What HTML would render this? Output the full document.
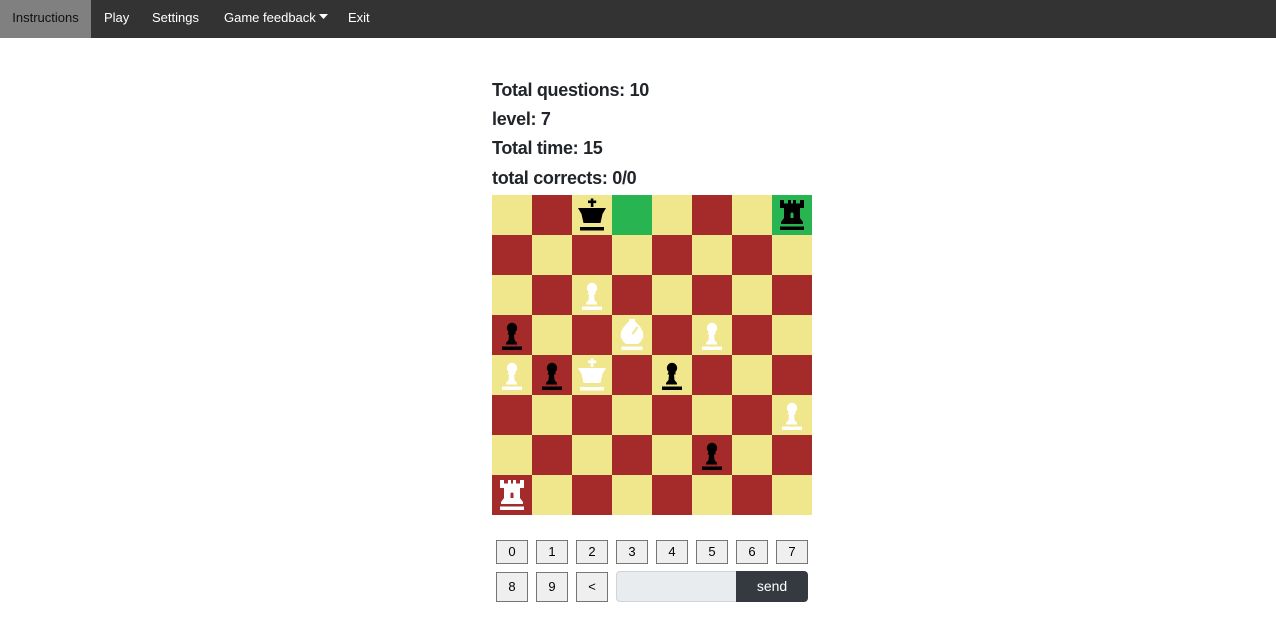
<!DOCTYPE html>
<html><head><meta charset="utf-8"><style>
*{margin:0;padding:0;box-sizing:border-box}
body{width:1276px;height:644px;background:#fff;font-family:"Liberation Sans",sans-serif;position:relative;overflow:hidden}
.nav{position:absolute;left:0;top:0;width:1276px;height:38px;background:#333}
.nav span{position:absolute;top:0;height:38px;line-height:36px;font-size:13px;color:#fff;white-space:nowrap}
.nav .act{left:0;width:91px;background:#808080;color:#111;text-align:center}
.info{position:absolute;left:492px;font-size:18px;font-weight:bold;color:#212529;letter-spacing:-0.3px}
.board{position:absolute;left:492px;top:195px;width:320px;height:320px}
.sq{position:absolute;width:40px;height:40px}
.btn{position:absolute;width:32px;background:#efefef;border:1px solid #767676;font-size:13px;text-align:center;color:#000}
.inp{position:absolute;left:616px;top:571px;width:122px;height:31px;background:#e9ecef;border:1px solid #ced4da;border-radius:4px 0 0 4px}
.send{position:absolute;left:736px;top:571px;width:72px;height:31px;background:#343a40;color:#fff;border-radius:0 4px 4px 0;font-size:14px;text-align:center;line-height:31px}
</style></head><body>
<div class="nav">
<span class="act">Instructions</span>
<span style="left:104px">Play</span>
<span style="left:152px">Settings</span>
<span style="left:224px">Game feedback <svg width="9" height="6" viewBox="0 0 9 6" style="vertical-align:2px"><path d="M0 0H9L4.5 5Z" fill="#fff"/></svg></span>
<span style="left:348px">Exit</span>
</div>
<div class="info" style="top:80px">Total questions: 10</div>
<div class="info" style="top:109px">level: 7</div>
<div class="info" style="top:138px">Total time: 15</div>
<div class="info" style="top:168px">total corrects: 0/0</div>
<svg width="0" height="0" style="position:absolute">
<defs>
<g id="pawn"><circle cx="20" cy="13" r="5.2"/><path d="M16.5 17h7v2.5h-1.5l0.5 5.5l2.5 3v1.5h-11v-1.5l2.5-3l0.5-5.5h-1.5z"/><rect x="10" y="31.5" width="20" height="3.5"/></g>
<g id="king"><rect x="18.8" y="3.5" width="2.6" height="8.5"/><rect x="16" y="5.5" width="8.2" height="2.6"/><path d="M6 13h28l-3.5 6l-2 9h-17l-2-9z"/><rect x="8" y="32" width="24" height="3.5"/></g>
<g id="rook"><path d="M8 5h4v3.5h4v-3.5h3v3.5h2v-3.5h3v3.5h4v-3.5h4v8h-4l0 10l3 4v2h-22v-2l3-4l0-10h-4z"/><rect x="8" y="31.5" width="24" height="3.5"/></g>
<g id="bishop"><path d="M17 4h6v2.5l3 3c4 4 6 8 5 13c-1 3-3 5-5 6.5h-12c-2-1.5-4-3.5-5-6.5c-1-5 1-9 5-13l3-3z"/><rect x="9.5" y="31.5" width="21" height="3.5"/></g>
</defs></svg>
<div class="board" id="b"></div>
<script>
var b=document.getElementById('b'),h='';
for(var r=0;r<8;r++)for(var c=0;c<8;c++){var col=(r+c)%2?'#a52a2a':'#f0e68c';if(r==0&&(c==3||c==7))col='#28b451';h+='<div class="sq" style="left:'+c*40+'px;top:'+r*40+'px;background:'+col+'"></div>';}
var P=[[0,2,'king','#000'],[0,7,'rook','#000'],[2,2,'pawn','#fff'],[3,0,'pawn','#000'],[3,3,'bishop','#fff'],[3,5,'pawn','#fff'],[4,0,'pawn','#fff'],[4,1,'pawn','#000'],[4,2,'king','#fff'],[4,4,'pawn','#000'],[5,7,'pawn','#fff'],[6,5,'pawn','#000'],[7,0,'rook','#fff']];
P.forEach(function(p){var extra='';var bg=(p[0]==0&&(p[1]==3||p[1]==7))?'#28b451':((p[0]+p[1])%2?'#a52a2a':'#f0e68c');
if(p[2]=='rook')extra='<path d="M18.5 19a1.5 1.5 0 0 1 3 0v4h-3z" fill="'+bg+'"/>';
if(p[2]=='bishop')extra='<path d="M25.5 12l-5 7" stroke="'+bg+'" stroke-width="2"/>';
h+='<svg class="sq" style="left:'+p[1]*40+'px;top:'+p[0]*40+'px" viewBox="0 0 40 40"><use href="#'+p[2]+'" fill="'+p[3]+'"/>'+extra+'</svg>';});
b.innerHTML=h;
var s='';for(var i=0;i<8;i++)s+='<div class="btn" style="left:'+(496+i*40)+'px;top:540px;height:24px;line-height:22px">'+i+'</div>';
['8','9','&lt;'].forEach(function(t,i){s+='<div class="btn" style="left:'+(496+i*40)+'px;top:572px;height:30px;line-height:28px">'+t+'</div>';});
document.body.insertAdjacentHTML('beforeend',s);
</script>
<div class="inp"></div>
<div class="send">send</div>
</body></html>
